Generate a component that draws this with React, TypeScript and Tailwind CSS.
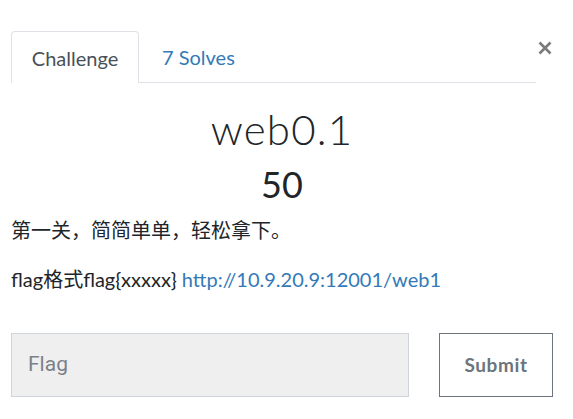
import React from "react";

export default function App() {
  return (
    <div className="w-[573px] h-[419px] bg-white relative overflow-hidden" style={{ fontFamily: "Lato, 'Noto Sans CJK SC', sans-serif" }}>
      <div className="flex items-start pl-[11px] pt-[31px]">
        <div className="w-[525px] flex border-b border-[#dee2e6] h-[52px]">
          <div className="w-[128px] h-[52px] border border-b-0 border-[#dee2e6] rounded-t-[4px] bg-white flex items-center justify-center text-[20px] text-[#495057] -mb-px">
            Challenge
          </div>
          <div className="flex items-center pl-[23px] text-[20px] text-[#337ab7]">7 Solves</div>
        </div>
        <div className="ml-[1px] mt-[9px] w-[16px] h-[16px] flex items-center justify-center">
          <svg width="14" height="14" viewBox="0 0 14 14">
            <path d="M1.5 1.5 L12.5 12.5 M12.5 1.5 L1.5 12.5" stroke="#7a7a7a" strokeWidth="2.6" />
          </svg>
        </div>
      </div>
      <div className="ml-[11px] w-[542px]">
        <div className="text-center mt-[21px] text-[42px] leading-[50px] text-[#212529] tracking-[1.2px] font-light">
          web0.1
        </div>
        <div className="text-center mt-[8px] text-[36px] leading-[44px] text-[#212529]">50</div>
        <div className="mt-[9px] text-[20px] leading-[30px] text-[#212529]">
          <p>第一关，简简单单，轻松拿下。</p>
          <p className="mt-[19px]">
            flag格式flag{"{xxxxx}"} <a className="text-[#337ab7]">http://10.9.20.9:12001/web1</a>
          </p>
        </div>
        <div className="flex justify-between mt-[39px]">
          <div className="w-[398px] h-[64px] bg-[#efefef] border border-[#ced4da] flex items-center pl-[16px] text-[21px] text-[#7b8189]" style={{ fontFamily: "Roboto, sans-serif" }}>
            Flag
          </div>
          <div className="w-[114px] h-[64px] border border-[#6c757d] flex items-center justify-center text-[19px] font-bold text-[#6c757d] tracking-[0.6px]">
            Submit
          </div>
        </div>
      </div>
    </div>
  );
}
